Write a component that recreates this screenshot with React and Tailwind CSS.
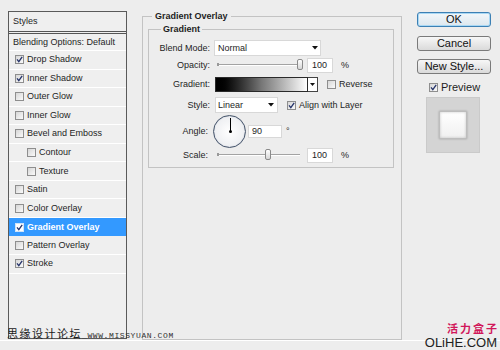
import React from "react";

function Arrow({ small }) {
  return small ? (
    <svg width="5" height="3" viewBox="0 0 5 3">
      <path d="M0 0H5L2.5 3Z" fill="#111" />
    </svg>
  ) : (
    <svg width="6" height="4" viewBox="0 0 6 4">
      <path d="M0 0H6L3 3.5Z" fill="#111" />
    </svg>
  );
}

function Check({ checked, white }) {
  return (
    <span
      className={
        white
          ? "w-[9px] h-[9px] shrink-0 border border-[#d0e4f8] bg-white flex items-center justify-center"
          : "w-[9px] h-[9px] shrink-0 border border-[#8e8e8e] bg-linear-to-br from-[#d6d6d6] to-[#fafafa] flex items-center justify-center"
      }
    >
      {checked && (
        <svg width="7" height="7" viewBox="0 0 7 7">
          <path d="M1 3.4 L2.8 5.6 L6.2 0.8" stroke="#26346a" strokeWidth="1.3" fill="none" />
        </svg>
      )}
    </span>
  );
}

function Slider({ thumb }) {
  return (
    <div className="relative ml-[7px] w-[86px] h-[12px] shrink-0">
      <div className="absolute left-0 right-[3px] top-[5px] h-[2px] border-t border-[#a3a3a3] border-b border-b-white" />
      <div className="absolute left-0 top-[4px] w-[2px] h-[3px] bg-[#9a9a9a]" />
      <div className={thumb + " absolute top-0 w-[6px] h-[11px] rounded-[2px] border border-[#8a8a8a] bg-linear-to-b from-white to-[#d6d6d6]"} />
    </div>
  );
}

function Field({ children }) {
  return (
    <div className="ml-[4px] w-[26px] h-[15px] bg-white border border-[#d8d8d8] flex items-center pl-[4px]">
      {children}
    </div>
  );
}

const rows = [
  { t: "Drop Shadow", c: true },
  { t: "Inner Shadow", c: true },
  { t: "Outer Glow" },
  { t: "Inner Glow" },
  { t: "Bevel and Emboss" },
  { t: "Contour", i: true },
  { t: "Texture", i: true },
  { t: "Satin" },
  { t: "Color Overlay" },
  { t: "Gradient Overlay", c: true, s: true },
  { t: "Pattern Overlay" },
  { t: "Stroke", c: true },
];

function Button({ children, ok, className = "" }) {
  return (
    <div
      className={
        (ok
          ? "border-[#3c80b4] bg-linear-to-b from-[#f2f7fa] to-[#dde7ee] shadow-[inset_0_0_0_1px_#a9d8f4] "
          : "border-[#7a7a7a] bg-linear-to-b from-[#f7f7f7] to-[#dadada] ") +
        "h-[15px] rounded-[3px] border flex items-center justify-center text-[11px] text-[#111] " +
        className
      }
    >
      {children}
    </div>
  );
}

export default function App() {
  return (
    <div className="relative w-[500px] h-[350px] overflow-hidden bg-[#ededed] font-['Liberation_Sans',Arial,sans-serif] text-[9px] leading-none text-[#1e1e1e]">
      <div className="flex items-start h-[341px] border-b border-white">
        {/* Styles list */}
        <div className="ml-[8px] mt-[11px] w-[119px] h-[328px] border border-[#5a5a5a] bg-[#efefef] flex flex-col">
          <div className="h-[22px] shrink-0 flex items-center pl-[4px] border-b-[3px] border-double border-[#555]">
            Styles
          </div>
          <div className="h-[17px] shrink-0 flex items-center pl-[4px] border-b border-white">
            Blending Options: Default
          </div>
          {rows.map((r) => (
            <div
              key={r.t}
              className={
                (r.s ? "bg-[#3399ff] text-white font-bold " : "border-b border-white ") +
                "h-[18.55px] shrink-0 flex items-center"
              }
            >
              <span className={r.i ? "ml-[18px]" : "ml-[6px]"}>
                <Check checked={r.c} white={r.s} />
              </span>
              <span className="ml-[3px]">{r.t}</span>
            </div>
          ))}
        </div>

        {/* Gradient Overlay */}
        <fieldset className="ml-[15px] mt-[10px] w-[260px] h-[330px] min-w-0 border border-[#c3c3c3] pl-[5px] pr-[7px] pt-[1px]">
          <legend className="ml-[4px] px-[3px] font-bold leading-[12px]">Gradient Overlay</legend>
          <fieldset className="min-w-0 border border-[#c3c3c3] pt-[5px] pb-[5px]">
            <legend className="ml-[12px] px-[2px] font-bold leading-[12px]">Gradient</legend>

            <div className="h-[16px] flex items-center">
              <span className="w-[61px] shrink-0 text-right">Blend Mode:</span>
              <div className="ml-[4px] w-[107px] h-[16px] bg-white border border-[#d8d8d8] flex items-center justify-between pl-[3px] pr-[2px]">
                <span>Normal</span>
                <Arrow />
              </div>
            </div>

            <div className="mt-[1px] h-[16px] flex items-center">
              <span className="w-[61px] shrink-0 text-right">Opacity:</span>
              <Slider thumb="left-[80px]" />
              <Field>100</Field>
              <span className="ml-[8px]">%</span>
            </div>

            <div className="mt-[3px] h-[16px] flex items-center">
              <span className="w-[61px] shrink-0 text-right">Gradient:</span>
              <div className="ml-[5px] w-[93px] h-[15px] border border-[#2a2a2a] bg-linear-to-r from-black via-[#777] to-white" />
              <div className="w-[10px] h-[15px] border border-l-0 border-[#444] bg-white flex items-center justify-center">
                <Arrow small />
              </div>
              <span className="ml-[9px]">
                <Check />
              </span>
              <span className="ml-[3px]">Reverse</span>
            </div>

            <div className="mt-[5px] h-[16px] flex items-center">
              <span className="w-[61px] shrink-0 text-right">Style:</span>
              <div className="ml-[5px] w-[63px] h-[16px] bg-white border border-[#d8d8d8] flex items-center justify-between pl-[2px] pr-[3px]">
                <span>Linear</span>
                <Arrow />
              </div>
              <span className="ml-[9px]">
                <Check checked />
              </span>
              <span className="ml-[3px]">Align with Layer</span>
            </div>

            <div className="mt-[1px] h-[34px] flex items-center">
              <span className="w-[61px] shrink-0 text-right pr-[2px]">Angle:</span>
              <div className="relative ml-[3px] w-[33px] h-[33px] rounded-full border border-[#46556b] bg-radial from-white to-[#e6e8ec] shadow-[inset_0_0_1px_#8090a8]">
                <div className="absolute left-[15.5px] top-[2px] w-px h-[14px] bg-black" />
                <div className="absolute left-[14.5px] top-[14.5px] w-[3px] h-[3px] rounded-full bg-black" />
              </div>
              <div className="ml-[2px] w-[34px] h-[13px] bg-white border border-[#d8d8d8] flex items-center pl-[3px]">90</div>
              <span className="ml-[4px]">°</span>
            </div>

            <div className="h-[14px] flex items-center">
              <span className="w-[61px] shrink-0 text-right pr-[2px]">Scale:</span>
              <Slider thumb="left-[48px]" />
              <Field>100</Field>
              <span className="ml-[8px]">%</span>
            </div>
          </fieldset>
        </fieldset>

        {/* Buttons */}
        <div className="ml-[15px] mt-[12px] w-[74px] flex flex-col">
          <Button ok>OK</Button>
          <Button className="mt-[9px]">Cancel</Button>
          <Button className="mt-[8px]">New Style...</Button>
          <div className="mt-[8px] h-[10px] flex items-center pl-[12px]">
            <Check checked />
            <span className="ml-[3px] text-[11px]">Preview</span>
          </div>
          <div className="mt-[5px] ml-[9px] w-[54px] h-[56px] bg-[#d4d4d4] border border-[#cacaca] flex items-center justify-center">
            <div className="w-[28px] h-[28px] bg-linear-to-b from-white to-[#f0f0f0] border border-[#bdbdbd] shadow-[0_0_2px_rgba(0,0,0,0.25),inset_0_0_3px_rgba(0,0,0,0.2)]" />
          </div>
        </div>
      </div>

      {/* watermarks */}
      <div className="absolute left-[7px] top-[327px] flex items-baseline">
        <span className="font-['Noto_Sans_CJK_SC',sans-serif] text-[11px] leading-[12px] tracking-[1.5px] text-[#1a1a1a]">
          思缘设计论坛
        </span>
        <span className="font-['Liberation_Mono',monospace] text-[8px] leading-[8px] tracking-[0.6px] text-[#333]">
          _WWW.MISSYUAN.COM
        </span>
      </div>
      <div className="absolute right-[1px] top-[323px] font-['Noto_Sans_CJK_SC',sans-serif] font-bold text-[11px] leading-[11px] tracking-[2px] text-[#d1175a]">
        活力盒子
      </div>
      <div className="absolute right-[3px] top-[337px] font-['Liberation_Sans',Arial,sans-serif] text-[13px] leading-[11px] text-[#222]">
        OLiHE.COM
      </div>
    </div>
  );
}
